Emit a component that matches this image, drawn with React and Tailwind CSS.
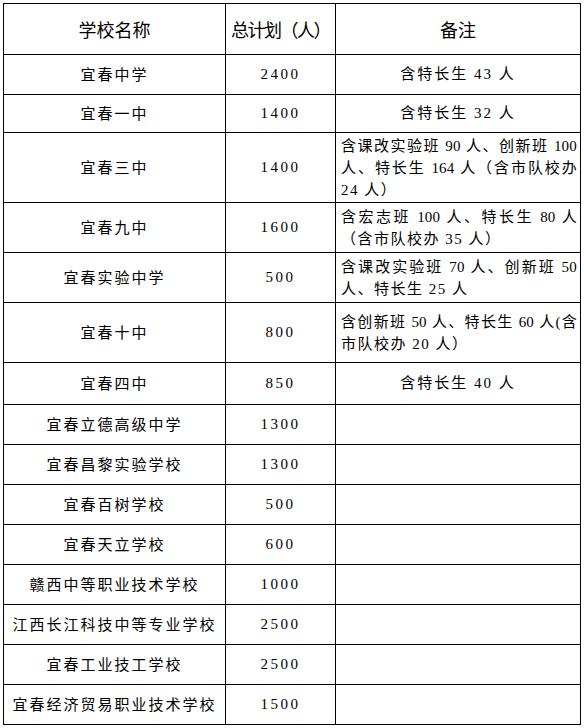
const rows = [
  { name: "宜春中学", total: "2400", h: "h-[40px]", note: ["含特长生 43 人"], center: true },
  { name: "宜春一中", total: "1400", h: "h-[38px]", note: ["含特长生 32 人"], center: true },
  {
    name: "宜春三中",
    total: "1400",
    h: "h-[70px]",
    note: ["含课改实验班 90 人、创新班 100", "人、特长生 164 人（含市队校办", "24 人）"],
    full: 2,
  },
  {
    name: "宜春九中",
    total: "1600",
    h: "h-[50px]",
    note: ["含宏志班 100 人、特长生 80 人", "（含市队校办 35 人）"],
    full: 1,
  },
  {
    name: "宜春实验中学",
    total: "500",
    h: "h-[50px]",
    note: ["含课改实验班 70 人、创新班 50", "人、特长生 25 人"],
    full: 1,
  },
  {
    name: "宜春十中",
    total: "800",
    h: "h-[60px]",
    note: ["含创新班 50 人、特长生 60 人(含", "市队校办 20 人）"],
    full: 1,
  },
  { name: "宜春四中", total: "850", h: "h-[42px]", note: ["含特长生 40 人"], center: true },
  { name: "宜春立德高级中学", total: "1300", h: "h-[40px]" },
  { name: "宜春昌黎实验学校", total: "1300", h: "h-[40px]" },
  { name: "宜春百树学校", total: "500", h: "h-[40px]" },
  { name: "宜春天立学校", total: "600", h: "h-[40px]" },
  { name: "赣西中等职业技术学校", total: "1000", h: "h-[40px]" },
  { name: "江西长江科技中等专业学校", total: "2500", h: "h-[40px]" },
  { name: "宜春工业技工学校", total: "2500", h: "h-[40px]" },
  { name: "宜春经济贸易职业技术学校", total: "1500", h: "h-[40px]" },
];

const song = "font-['Liberation_Serif','Noto_Sans_CJK_SC',serif]";

function Note({ row }) {
  if (!row.note) return null;
  if (row.center) {
    return (
      <div className={`${song} text-[15px] tracking-[2px] text-center w-full`}>
        {row.note[0]}
      </div>
    );
  }
  return (
    <div className={`${song} text-[15px] tracking-[0.2px] leading-[22px] w-full pl-[5px] pr-[3px]`}>
      {row.note.map((line, i) => (
        <div
          key={i}
          className={`whitespace-nowrap ${i < row.full ? "[text-align-last:justify]" : "tracking-[1.5px]"}`}
        >
          {line}
        </div>
      ))}
    </div>
  );
}

export default function App() {
  return (
    <div className="bg-white w-[584px] h-[728px] pt-[3px] pl-[3px] text-black">
      <div className="w-[578px] border-l border-t border-black">
        <div className="grid grid-cols-[222px_110px_245px] h-[51px] border-b border-black font-['Noto_Sans_CJK_SC',sans-serif]">
          <div className="flex items-center justify-center border-r border-black text-[18px]">
            学校名称
          </div>
          <div className="flex items-center justify-center border-r border-black text-[18px] tracking-[-1.5px] whitespace-nowrap">
            总计划（人）
          </div>
          <div className="flex items-center justify-center border-r border-black text-[18px]">
            备注
          </div>
        </div>
        {rows.map((r) => (
          <div
            key={r.name}
            className={`grid grid-cols-[222px_110px_245px] border-b border-black ${r.h}`}
          >
            <div className="flex items-center justify-center border-r border-black font-['Noto_Sans_CJK_SC',serif] text-[15px] tracking-[2px] whitespace-nowrap">
              {r.name}
            </div>
            <div className="flex items-center justify-center border-r border-black font-['Liberation_Serif',serif] text-[15px] tracking-[2.5px]">
              {r.total}
            </div>
            <div className="flex items-center border-r border-black">
              <Note row={r} />
            </div>
          </div>
        ))}
      </div>
    </div>
  );
}
